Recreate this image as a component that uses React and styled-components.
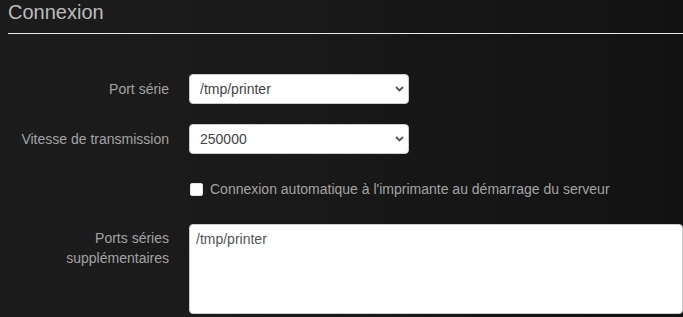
import React from "react";
import styled, { createGlobalStyle } from "styled-components";

const GlobalStyle = createGlobalStyle`
  html, body {
    margin: 0;
    padding: 0;
    height: 100%;
    overflow: hidden;
  }
  body {
    background: linear-gradient(to right, #1c1c1c 0%, #1a1a1a 35%, #121212 100%);
    font-family: "Liberation Sans", Arial, sans-serif;
  }
`;

const Page = styled.div`
  padding: 0 0 0 8px;
  height: 317px;
  box-sizing: border-box;
`;

const Title = styled.h2`
  margin: 0 0 40px;
  padding: 1px 0 9px 0;
  font-size: 20px;
  line-height: 23px;
  font-weight: normal;
  color: #bdbdbd;
  border-bottom: 1px solid #e8e8e8;
`;

const Form = styled.div`
  display: flex;
  flex-direction: column;
  gap: 20px;
`;

const Row = styled.div`
  display: flex;
  align-items: ${(p) => (p.$top ? "flex-start" : "center")};
  min-height: 30px;
`;

const Label = styled.label`
  flex: 0 0 181px;
  box-sizing: border-box;
  padding-right: 20px;
  padding-top: ${(p) => (p.$top ? "4px" : "0")};
  text-align: right;
  font-size: 14px;
  line-height: 20px;
  color: #a3a3a3;
`;

const SelectWrap = styled.div`
  position: relative;
  width: 220px;
`;

const Select = styled.select`
  appearance: none;
  width: 100%;
  height: 30px;
  padding: 0 24px 0 10px;
  border: 1px solid #ccc;
  border-radius: 4px;
  background: #fff;
  color: #444;
  font-family: "Liberation Sans", Arial, sans-serif;
  font-size: 14px;
  outline: none;
`;

const Chevron = styled.svg`
  position: absolute;
  right: 5px;
  top: 12px;
  pointer-events: none;
`;

const CheckLabel = styled.label`
  display: flex;
  align-items: center;
  gap: 7px;
  margin-left: 181px;
  font-size: 14px;
  color: #a3a3a3;
`;

const Box = styled.input`
  appearance: none;
  margin: 0 0 0 1px;
  width: 13px;
  height: 13px;
  border: 1px solid #e3e3e3;
  border-radius: 2px;
  background: #fff;
`;

const Area = styled.textarea`
  width: 520px;
  height: 90px;
  box-sizing: border-box;
  padding: 4px 6px;
  border: 1px solid #ccc;
  border-radius: 4px;
  background: #fff;
  color: #555;
  font-family: "Liberation Sans", Arial, sans-serif;
  font-size: 14px;
  line-height: 20px;
  resize: none;
  outline: none;
`;

const Dropdown = ({ value }) => (
  <SelectWrap>
    <Select defaultValue={value}>
      <option>{value}</option>
    </Select>
    <Chevron width="9" height="6" viewBox="0 0 9 6">
      <path d="M1 1l3.5 3.5L8 1" fill="none" stroke="#555" strokeWidth="1.8" />
    </Chevron>
  </SelectWrap>
);

export default function App() {
  return (
    <Page>
      <GlobalStyle />
      <Title>Connexion</Title>
      <Form>
        <Row>
          <Label>Port série</Label>
          <Dropdown value="/tmp/printer" />
        </Row>
        <Row>
          <Label>Vitesse de transmission</Label>
          <Dropdown value="250000" />
        </Row>
        <Row>
          <CheckLabel>
            <Box type="checkbox" />
            Connexion automatique à l'imprimante au démarrage du serveur
          </CheckLabel>
        </Row>
        <Row $top>
          <Label $top>Ports séries supplémentaires</Label>
          <Area defaultValue="/tmp/printer" />
        </Row>
      </Form>
    </Page>
  );
}
